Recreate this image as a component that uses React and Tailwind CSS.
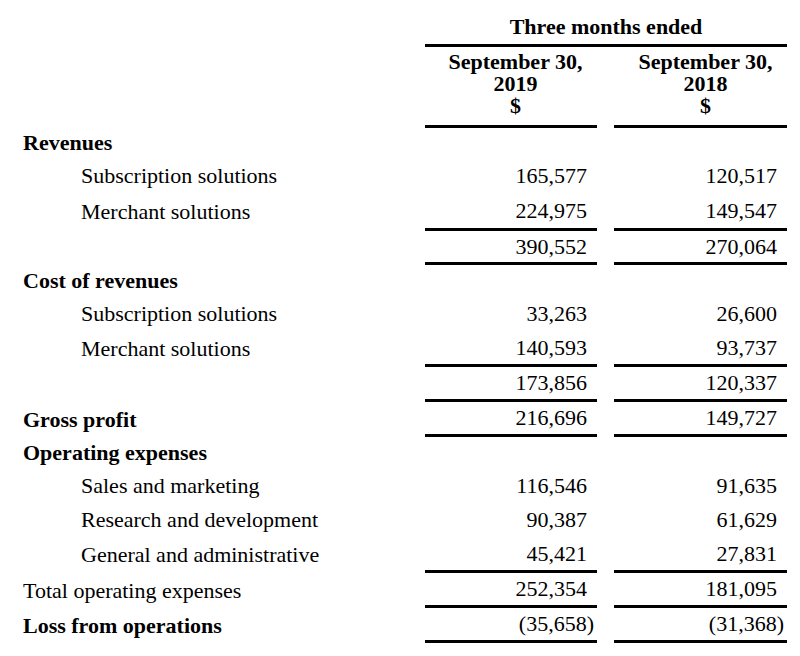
const rows = [
  { label: "Revenues", bold: true, h: "h-[30px]" },
  { label: "Subscription solutions", indent: true, a: "165,577", b: "120,517", h: "h-[35px]" },
  { label: "Merchant solutions", indent: true, a: "224,975", b: "149,547", h: "h-[38px]", line: true },
  { label: "", a: "390,552", b: "270,064", h: "h-[34px]", line: true },
  { label: "Cost of revenues", bold: true, h: "h-[32px]" },
  { label: "Subscription solutions", indent: true, a: "33,263", b: "26,600", h: "h-[34px]" },
  { label: "Merchant solutions", indent: true, a: "140,593", b: "93,737", h: "h-[36px]", line: true },
  { label: "", a: "173,856", b: "120,337", h: "h-[35px]", line: true },
  { label: "Gross profit", bold: true, a: "216,696", b: "149,727", h: "h-[35px]", line: true },
  { label: "Operating expenses", bold: true, h: "h-[32px]" },
  { label: "Sales and marketing", indent: true, a: "116,546", b: "91,635", h: "h-[34px]" },
  { label: "Research and development", indent: true, a: "90,387", b: "61,629", h: "h-[34px]" },
  { label: "General and administrative", indent: true, a: "45,421", b: "27,831", h: "h-[36px]", line: true },
  { label: "Total operating expenses", a: "252,354", b: "181,095", h: "h-[35px]", line: true },
  { label: "Loss from operations", bold: true, a: "(35,658)", b: "(31,368)", h: "h-[35px]", line: true },
];

function Amount({ value, line, wide }) {
  const neg = value && value.endsWith(")");
  return (
    <div
      className={`${wide ? "w-[173px]" : "w-[172px]"} h-full flex items-center justify-end pr-[10px] ${
        line ? "border-b-[3px] border-black" : ""
      }`}
    >
      {neg ? (
        <span>
          {value.slice(0, -1)}
          <span className="inline-block mr-[-7px]">)</span>
        </span>
      ) : (
        <span>{value}</span>
      )}
    </div>
  );
}

export default function App() {
  return (
    <div
      className="w-[800px] h-[656px] bg-white text-black text-[22px] overflow-hidden"
      style={{ fontFamily: '"Liberation Serif", "Times New Roman", serif' }}
    >
      {/* heading */}
      <div className="flex">
        <div className="w-[425px]" />
        <div className="w-[362px] h-[47px] flex items-end justify-center pb-[5px] border-b-[3px] border-black font-bold leading-[24px]">
          Three months ended
        </div>
      </div>
      <div className="flex h-[81px]">
        <div className="w-[425px]" />
        <div className="w-[172px] pt-[4px] pl-[9px] border-b-[3px] border-black text-center font-bold leading-[22px]">
          September 30,
          <br />
          2019
          <br />$
        </div>
        <div className="w-[17px]" />
        <div className="w-[173px] pt-[4px] pl-[10px] border-b-[3px] border-black text-center font-bold leading-[22px]">
          September 30,
          <br />
          2018
          <br />$
        </div>
      </div>

      {rows.map((r, i) => (
        <div key={i} className={`flex ${r.h} leading-[24px]`}>
          <div
            className={`w-[425px] flex items-center ${r.indent ? "pl-[81px]" : "pl-[23px]"} ${
              r.bold ? "font-bold" : ""
            }`}
          >
            {r.label}
          </div>
          <Amount value={r.a} line={r.line} />
          <div className="w-[17px]" />
          <Amount value={r.b} line={r.line} wide />
        </div>
      ))}
    </div>
  );
}
